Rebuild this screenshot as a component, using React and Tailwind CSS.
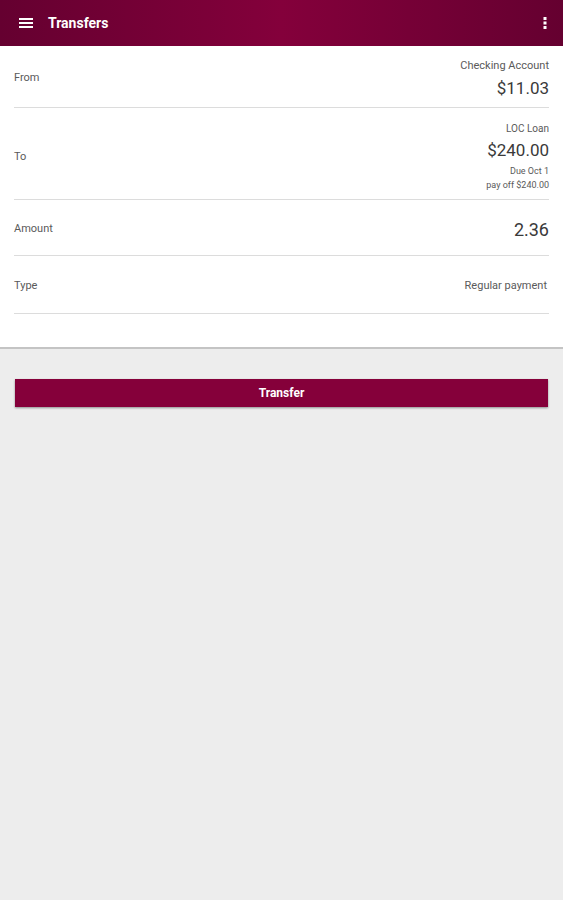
import React from "react";

const Row = ({ label, children, className }) => (
  <div className={`flex items-center justify-between border-b border-[#dcdcdc] ${className}`}>
    <span className="text-[11px] text-[#5a5a5a]">{label}</span>
    <div className="flex flex-col items-end text-right">{children}</div>
  </div>
);

const App = () => {
  return (
    <div className="min-h-[900px] bg-[#ededed] font-['Roboto',sans-serif]">
      <header className="flex h-[46px] items-center justify-between bg-[linear-gradient(90deg,#650030_0%,#84003b_50%,#650030_100%)] px-[19px] shadow-[0_1px_2px_rgba(0,0,0,0.35)]">
        <div className="flex items-center">
          <svg width="14" height="12" viewBox="0 0 14 12" className="mr-[15px]">
            <rect x="0" y="1" width="14" height="2" fill="#fff" />
            <rect x="0" y="5" width="14" height="2" fill="#fff" />
            <rect x="0" y="9" width="14" height="2" fill="#fff" />
          </svg>
          <h1 className="text-[14px] font-bold text-white">Transfers</h1>
        </div>
        <svg width="4" height="12" viewBox="0 0 4 12" className="mr-[-3px]">
          <rect x="0.5" y="0" width="3" height="3" fill="#fff" />
          <rect x="0.5" y="4.5" width="3" height="3" fill="#fff" />
          <rect x="0.5" y="9" width="3" height="3" fill="#fff" />
        </svg>
      </header>

      <div className="border-b-[2px] border-[#c4c4c4] bg-white px-[14px] pb-[33px]">
        <Row label="From" className="h-[62px] pt-[4px]">
          <span className="text-[11px] leading-[13px] text-[#5a5a5a]">Checking Account</span>
          <span className="mt-[6px] text-[17px] leading-[20px] text-[#3a3a3a]">$11.03</span>
        </Row>
        <Row label="To" className="h-[92px] pt-[7px]">
          <span className="text-[10px] leading-[12px] text-[#5a5a5a]">LOC Loan</span>
          <span className="mt-[5px] text-[17px] leading-[20px] text-[#3a3a3a]">$240.00</span>
          <span className="mt-[6px] text-[9px] leading-[11px] text-[#5a5a5a]">Due Oct 1</span>
          <span className="mt-[3px] text-[9px] leading-[11px] text-[#5a5a5a]">pay off $240.00</span>
        </Row>
        <Row label="Amount" className="h-[56px] pt-[4px]">
          <span className="text-[18px] leading-[20px] text-[#3a3a3a]">2.36</span>
        </Row>
        <Row label="Type" className="h-[58px] pt-[4px]">
          <span className="mr-[2px] text-[11px] text-[#5a5a5a]">Regular payment</span>
        </Row>
      </div>

      <div className="px-[15px] pt-[30px]">
        <button className="h-[28px] w-full bg-[#85003a] text-[12px] font-bold text-white shadow-[0_1px_2px_rgba(0,0,0,0.4)]">
          Transfer
        </button>
      </div>
    </div>
  );
};

export default App;
